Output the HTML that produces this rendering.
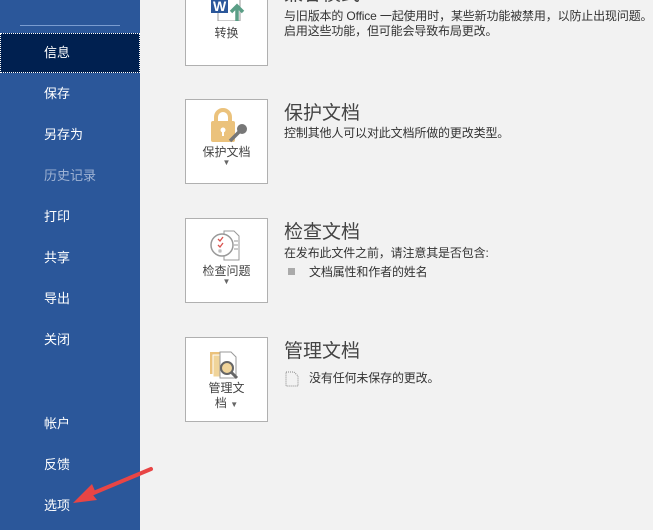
<!DOCTYPE html>
<html><head><meta charset="utf-8"><style>
body{margin:0;width:653px;height:530px;overflow:hidden;background:#f2f2f2;font-family:"Liberation Sans","Noto Sans CJK SC",sans-serif;position:relative}
.side{position:absolute;left:0;top:0;width:140px;height:530px;background:#2b579a}
.it{position:absolute;left:44px;color:#fff;font-size:13px;line-height:16px}
.sel{position:absolute;left:0;top:33px;width:138px;height:38px;background:#002050;border:1px dotted #fff}
.box{position:absolute;left:185px;width:81px;background:#fff;border:1px solid #b0b0b0;text-align:center;font-size:12px;color:#444}
.t{position:absolute;left:284px;font-size:19px;color:#444;white-space:nowrap}
.d{position:absolute;left:284px;font-size:12px;color:#333;line-height:15px;white-space:nowrap;letter-spacing:-0.15px}
.ar{font-size:8px;color:#666}
</style></head><body>
<div class="side">
<div style="position:absolute;left:20px;top:25px;width:100px;height:1px;background:#7a9cd0"></div>
<div class="sel"></div>
<div class="it" style="top:45px">信息</div>
<div class="it" style="top:86px">保存</div>
<div class="it" style="top:127px">另存为</div>
<div class="it" style="top:168px;color:#9fb3d4">历史记录</div>
<div class="it" style="top:209px">打印</div>
<div class="it" style="top:250px">共享</div>
<div class="it" style="top:291px">导出</div>
<div class="it" style="top:332px">关闭</div>
<div class="it" style="top:416px">帐户</div>
<div class="it" style="top:457px">反馈</div>
<div class="it" style="top:498px">选项</div>
</div>
<div class="box" style="top:-20px;height:84px">
<svg width="40" height="40" style="position:absolute;left:24px;top:0px"><rect x="8" y="12" width="22" height="28" fill="#fff" stroke="#999"/><rect x="1" y="16" width="17" height="16" fill="#2b579a"/><text x="3" y="30" font-size="14" fill="#fff" font-weight="bold" font-family="Liberation Sans">W</text><path d="M27 40V26M21 31l6-6 6 6" stroke="#5a9e86" stroke-width="3.5" fill="none"/></svg>
<div style="position:absolute;top:43px;width:100%">转换</div></div>
<div class="box" style="top:99px;height:83px">
<svg width="40" height="36" style="position:absolute;left:24px;top:8px"><rect x="1" y="13" width="24" height="21" rx="2" fill="#ebc27c"/><path d="M6 13V9a7 7 0 0114 0v4" stroke="#ebc27c" stroke-width="4" fill="none"/><circle cx="13" cy="22" r="2.5" fill="#fff"/><rect x="12" y="22" width="2" height="6" fill="#fff"/><circle cx="32" cy="21" r="5" fill="#777"/><path d="M29 24l-9 9" stroke="#777" stroke-width="3.5"/></svg>
<div style="position:absolute;top:43px;width:100%">保护文档</div><div class="ar" style="position:absolute;top:58px;width:100%">▼</div></div>
<div class="box" style="top:218px;height:83px">
<svg width="44" height="36" style="position:absolute;left:20px;top:10px"><path d="M18 2h10l5 5v24H18z" fill="#fff" stroke="#999"/><path d="M28 12h4M28 16h4M28 20h4" stroke="#999"/><circle cx="16" cy="16" r="11" fill="#fff" stroke="#999" stroke-width="1.5"/><path d="M12 10l2 2 3-4M12 16l2 2 3-4" stroke="#d9534f" fill="none" stroke-width="1.3"/><rect x="13" y="21" width="2" height="2" fill="none" stroke="#999" stroke-width=".8"/></svg>
<div style="position:absolute;top:43px;width:100%">检查问题</div><div class="ar" style="position:absolute;top:58px;width:100%">▼</div></div>
<div class="box" style="top:337px;height:83px">
<svg width="40" height="34" style="position:absolute;left:22px;top:12px"><rect x="2" y="2" width="14" height="22" fill="#ebc27c"/><rect x="5" y="5" width="14" height="22" fill="#f0d49a" stroke="#fff"/><path d="M12 2h11l5 5v21H12z" fill="#fff" stroke="#999"/><circle cx="19" cy="18" r="6" fill="#f0d49a" stroke="#666" stroke-width="2"/><path d="M23 22l6 6" stroke="#666" stroke-width="3"/></svg>
<div style="position:absolute;top:43px;width:100%;line-height:15px">管理文<br>档 <span class="ar">▼</span></div></div>
<div class="t" style="top:-21px">兼容模式</div>
<div class="d" style="top:9px">与旧版本的 Office 一起使用时，某些新功能被禁用，以防止出现问题。<br>启用这些功能，但可能会导致布局更改。</div>
<div class="t" style="top:98px">保护文档</div>
<div class="d" style="top:126px">控制其他人可以对此文档所做的更改类型。</div>
<div class="t" style="top:217px">检查文档</div>
<div class="d" style="top:246px">在发布此文件之前，请注意其是否包含:</div>
<div style="position:absolute;left:288px;top:268px;width:7px;height:7px;background:#aaa"></div>
<div class="d" style="top:265px;left:309px">文档属性和作者的姓名</div>
<div class="t" style="top:336px">管理文档</div>
<svg width="14" height="16" style="position:absolute;left:285px;top:371px"><path d="M1 1h8l4 4v10H1z" fill="none" stroke="#888" stroke-dasharray="1 1"/></svg>
<div class="d" style="top:371px;left:309px">没有任何未保存的更改。</div>
<svg width="653" height="530" style="position:absolute;left:0;top:0"><path d="M151 469L95 491L92 484L73 503L97 500L93 495Z" fill="#e84545"/><path d="M151 469L84 497" stroke="#e84545" stroke-width="4" stroke-linecap="round"/></svg>
</body></html>
